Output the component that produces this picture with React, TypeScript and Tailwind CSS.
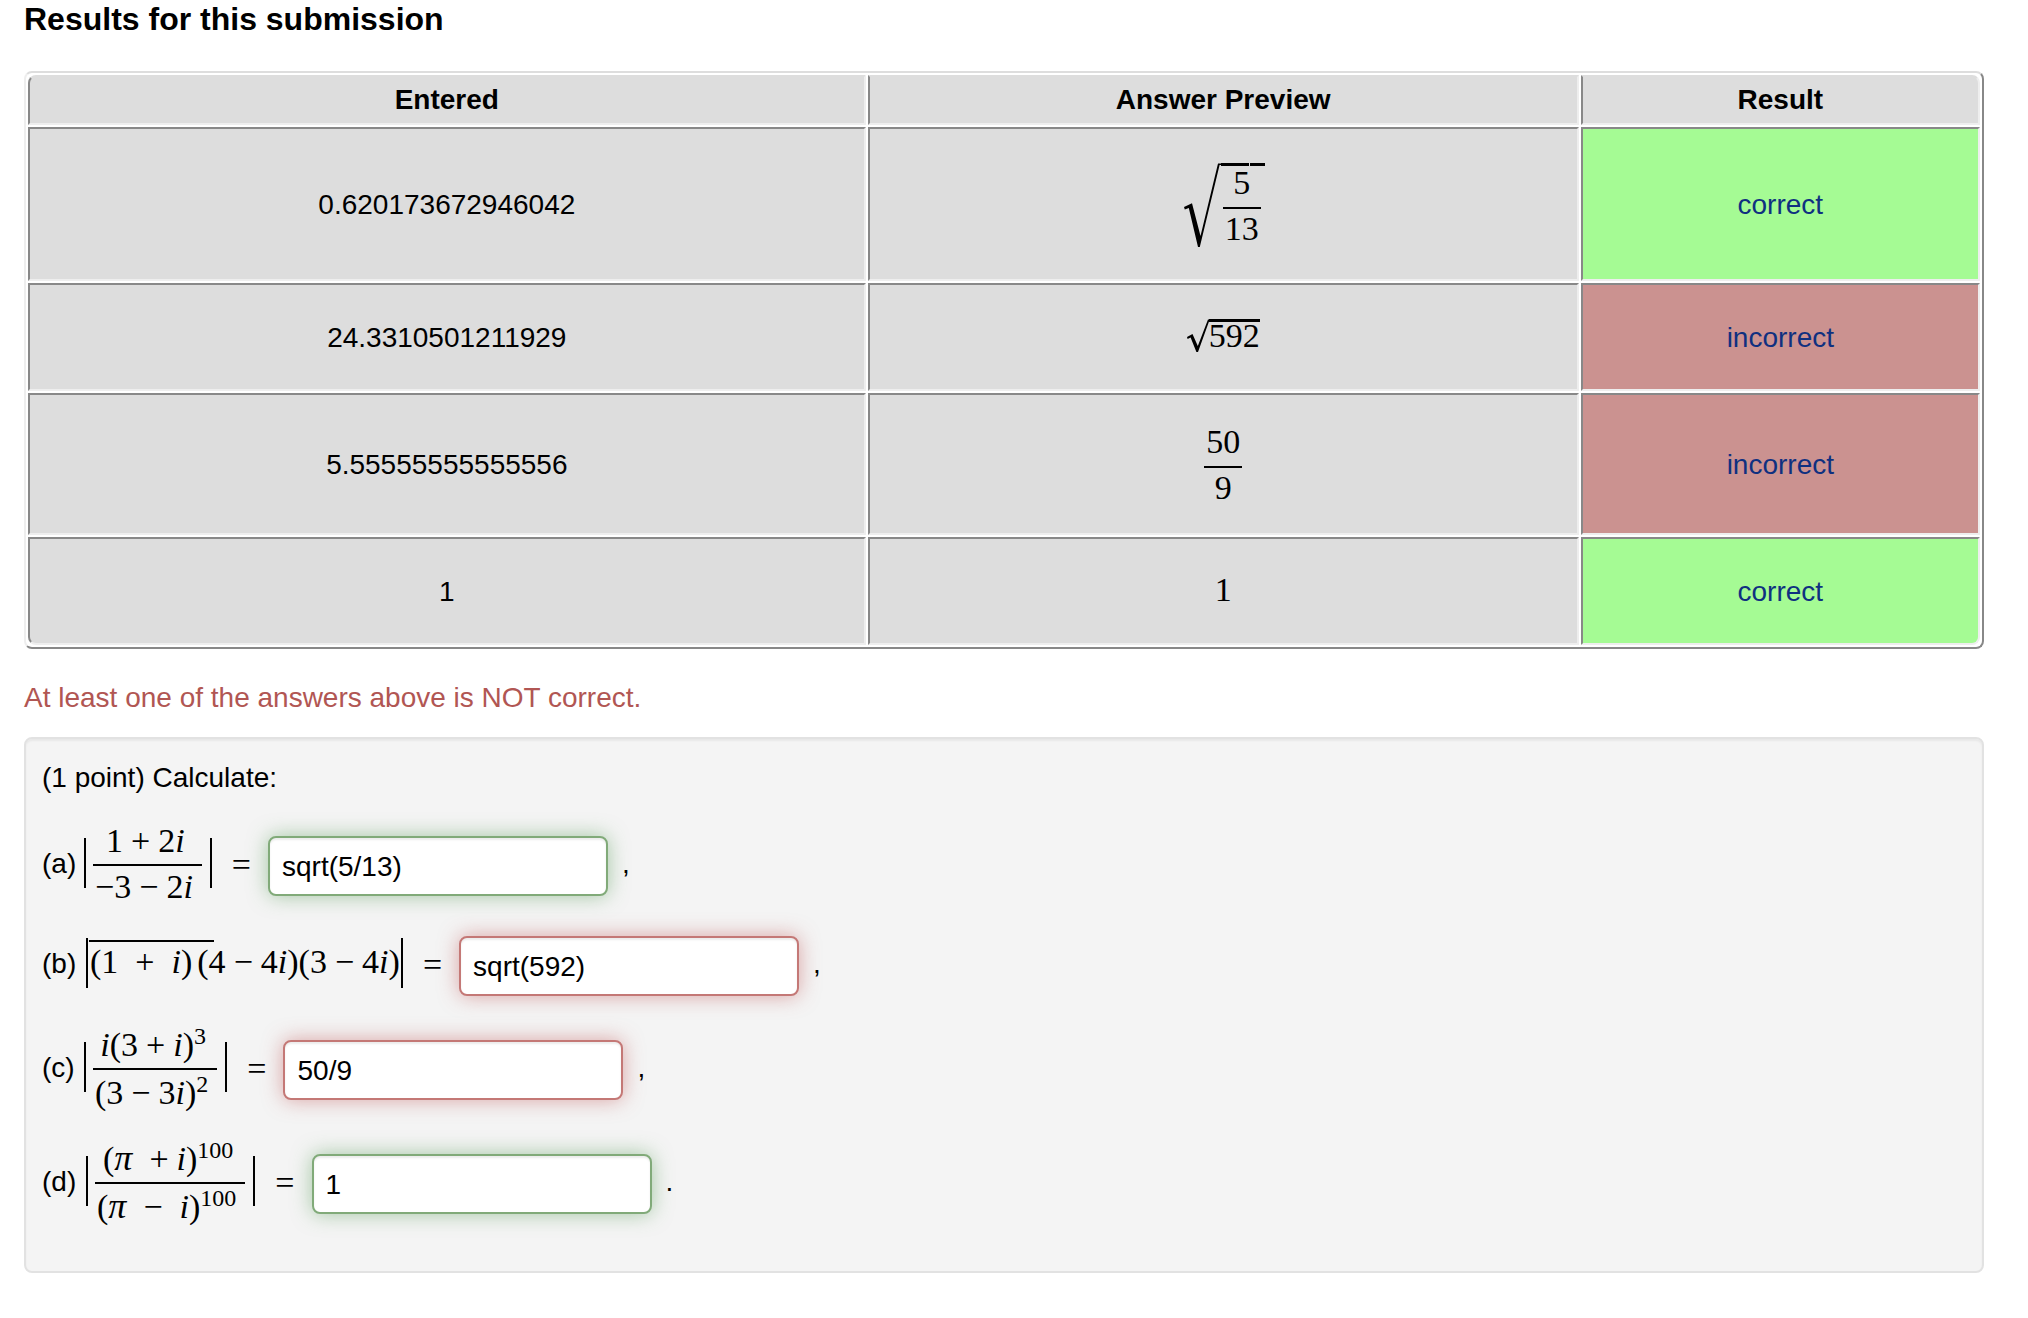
import type { ReactNode } from "react";

function Op({ children, wide = "" }: { children: ReactNode; wide?: "" | "left" | "both" }) {
  const margin = wide === "both" ? "mx-[17px]" : wide === "left" ? "ml-[17px] mr-2" : "mx-2";
  return <span className={margin}>{children}</span>;
}

function Sup({ children }: { children: ReactNode }) {
  return <sup className="text-2xl leading-0 not-italic">{children}</sup>;
}

function I() {
  return <i>i</i>;
}

function Pi() {
  return <i className="text-4xl leading-0">π</i>;
}

function Bar() {
  return <span className="mb-1.5 h-[50px] w-0.5 bg-black" />;
}

type FracProps = { top: ReactNode; bottom: ReactNode; expression?: boolean; powers?: boolean };

function Frac({ top, bottom, expression = false, powers = false }: FracProps) {
  const above = expression ? "pt-px pr-1 pb-[7px]" : "px-0.5 pb-2";
  const below = powers
    ? "pt-[7px] pr-[9px] pb-px pl-0.5"
    : expression
      ? "pt-[5px] pr-[9px] pb-[3px] pl-0.5"
      : "px-0.5 py-1";
  return (
    <span className="inline-flex flex-col text-center text-[34px] leading-8 whitespace-nowrap">
      <span className={above}>{top}</span>
      <span className="h-0.5 bg-black" />
      <span className={below}>{bottom}</span>
    </span>
  );
}

function SqrtFrac() {
  return (
    <span className="inline-flex items-start pt-1 pl-0.5 font-['Liberation_Serif',serif]">
      <svg viewBox="0 0 37 84" className="h-[84px] w-[37px]" aria-hidden="true">
        <path d="M0 44 L8 40.3 L16.5 73 L34 0.5 H37 V2 H35.6 L15.8 84 H14 L4.8 45 L0.8 46.5 Z" fill="black" />
      </svg>
      <span className="flex flex-col">
        <span className="flex gap-px">
          <span className="h-[3px] w-7 bg-black" />
          <span className="h-[3px] grow bg-black" />
        </span>
        <span className="-mt-[3px] pr-1 pl-0.5">
          <Frac top={<span className="px-0.5">5</span>} bottom="13" />
        </span>
      </span>
    </span>
  );
}

function Sqrt({ children }: { children: ReactNode }) {
  return (
    <span className="inline-flex items-start pb-1 font-['Liberation_Serif',serif]">
      <svg viewBox="0 0 22 33" className="h-[33px] w-[22px]" aria-hidden="true">
        <path d="M0 18 L5.5 15 L10.8 27 L21 0.5 H22 V2.5 L11 33 H9.4 L3.6 18.5 L0.6 20 Z" fill="black" />
      </svg>
      <span className="border-t-[3px] border-black text-[34px] leading-7">{children}</span>
    </span>
  );
}

type Row = { entered: string; preview: ReactNode; correct: boolean; height: string };

const rows: Row[] = [
  { entered: "0.620173672946042", preview: <SqrtFrac />, correct: true, height: "h-[154px]" },
  { entered: "24.3310501211929", preview: <Sqrt>592</Sqrt>, correct: false, height: "h-[108px]" },
  {
    entered: "5.55555555555556",
    preview: (
      <span className="inline-block pt-0.5">
        <Frac top="50" bottom="9" />
      </span>
    ),
    correct: false,
    height: "h-[142px]",
  },
  { entered: "1", preview: <span className="pb-0.5">1</span>, correct: true, height: "h-[108px]" },
];

const cell = "border-2 border-t-[#888] border-l-[#888] border-r-[#eee] border-b-[#eee] text-center align-middle";
const head =
  "h-[50px] border-2 border-t-[#ddd] border-l-[#888] border-r-[#eee] border-b-[#eee] bg-[#ddd] p-0 text-center font-bold";

function ResultsTable() {
  return (
    <table className="w-full table-fixed border-separate border-spacing-0.5 rounded-lg border-2 border-t-[#ddd] border-r-[#888] border-b-[#888] border-l-[#eee]">
      <thead>
        <tr>
          <th scope="col" className={`${head} w-[43%] rounded-tl-lg`}>Entered</th>
          <th scope="col" className={head}>Answer Preview</th>
          <th scope="col" className={`${head} w-[20.5%] rounded-tr-lg`}>Result</th>
        </tr>
      </thead>
      <tbody>
        {rows.map((row, index) => {
          const last = index === rows.length - 1;
          return (
            <tr key={row.entered}>
              <td className={`${cell} ${row.height} bg-[#ddd] p-0 pt-0.5 ${last ? "rounded-bl-lg" : ""}`}>
                {row.entered}
              </td>
              <td className={`${cell} bg-[#ddd] p-0 font-['Liberation_Serif',serif] text-[34px]`}>
                <span className="flex justify-center">{row.preview}</span>
              </td>
              <td
                className={`${cell} p-0 pt-0.5 ${row.correct ? "bg-[#a5fb94]" : "bg-[#cb9290]"} ${
                  last ? "rounded-br-lg" : ""
                }`}
              >
                <a href="#problem" className="text-[#0f3080]">
                  {row.correct ? "correct" : "incorrect"}
                </a>
              </td>
            </tr>
          );
        })}
      </tbody>
    </table>
  );
}

type PartProps = {
  id: string;
  height: string;
  label: string;
  wideLabel?: boolean;
  math: ReactNode;
  value: string;
  correct: boolean;
  end: string;
};

function Part({ id, height, label, wideLabel = false, math, value, correct, end }: PartProps) {
  return (
    <div className={`flex items-center ${height}`}>
      <label htmlFor={id} className={`pb-1 ${wideLabel ? "w-11" : "w-[42px]"}`}>
        {label}
      </label>
      <span className="flex items-center font-['Liberation_Serif',serif] text-[34px] whitespace-nowrap">
        {math}
        <span className="ml-5 pb-0.5 leading-8">=</span>
      </span>
      <input
        id={id}
        type="text"
        defaultValue={value}
        className={`ml-[17px] h-[60px] w-[340px] rounded-lg border-2 bg-white px-3 pt-0.5 leading-10 ${
          correct
            ? "border-[#81aa79] shadow-[inset_0_2px_2px_rgba(0,0,0,0.075),0_0_20px_rgba(81,153,81,0.5)]"
            : "border-[#c47876] shadow-[inset_0_2px_2px_rgba(0,0,0,0.075),0_0_20px_rgba(191,84,84,0.5)]"
        }`}
      />
      <span className="ml-[14px] pb-1">{end}</span>
    </div>
  );
}

function AbsoluteFrac({ top, bottom, powers }: FracProps) {
  return (
    <>
      <Bar />
      <span className="mr-2 ml-[7px] flex pb-0.5">
        <Frac expression powers={powers} top={top} bottom={bottom} />
      </span>
      <Bar />
    </>
  );
}

export default function App() {
  return (
    <main className="bg-white pr-11 pb-11 pl-6 font-['Liberation_Sans',Arial,sans-serif] text-[28px] leading-10 text-black">
      <h1 className="mb-[33px] text-[32px] leading-[38px] font-bold">Results for this submission</h1>
      <ResultsTable />
      <p className="mt-[29px] mb-[19px] text-[#b15653]">At least one of the answers above is NOT correct.</p>
      <section
        id="problem"
        className="rounded-lg border-2 border-[#e2e2e2] bg-[#f4f4f4] px-4 pt-[19px] pb-[29px] shadow-[inset_0_2px_2px_rgba(0,0,0,0.05)]"
      >
        <p className="mb-4">(1 point) Calculate:</p>
        <Part
          id="answer-a"
          height="min-h-[104px]"
          label="(a)"
          value="sqrt(5/13)"
          correct
          end=","
          math={<AbsoluteFrac top={<>1<Op>+</Op>2<I /></>} bottom={<>−3<Op>−</Op>2<I /></>} />}
        />
        <Part
          id="answer-b"
          height="min-h-[96px]"
          label="(b)"
          wideLabel
          value="sqrt(592)"
          correct={false}
          end=","
          math={
            <>
              <Bar />
              <span className="mr-px ml-0.5 pb-2 leading-8">
                <span className="relative mr-[5px] inline-block">
                  <span className="absolute -top-1.5 -left-px h-0.5 w-[125px] bg-black" />
                  (1<Op wide="both">+</Op><I />)
                </span>
                (4<Op>−</Op>4<I />)(3<Op>−</Op>4<I />)
              </span>
              <Bar />
            </>
          }
        />
        <Part
          id="answer-c"
          height="min-h-[112px]"
          label="(c)"
          value="50/9"
          correct={false}
          end=","
          math={
            <AbsoluteFrac
              powers
              top={<><I />(3<Op>+</Op><I />)<Sup>3</Sup></>}
              bottom={<>(3<Op>−</Op>3<I />)<Sup>2</Sup></>}
            />
          }
        />
        <Part
          id="answer-d"
          height="min-h-[116px]"
          label="(d)"
          wideLabel
          value="1"
          correct
          end="."
          math={
            <AbsoluteFrac
              powers
              top={<>(<Pi /><Op wide="left">+</Op><I />)<Sup>100</Sup></>}
              bottom={<>(<Pi /><Op wide="both">−</Op><I />)<Sup>100</Sup></>}
            />
          }
        />
      </section>
    </main>
  );
}
